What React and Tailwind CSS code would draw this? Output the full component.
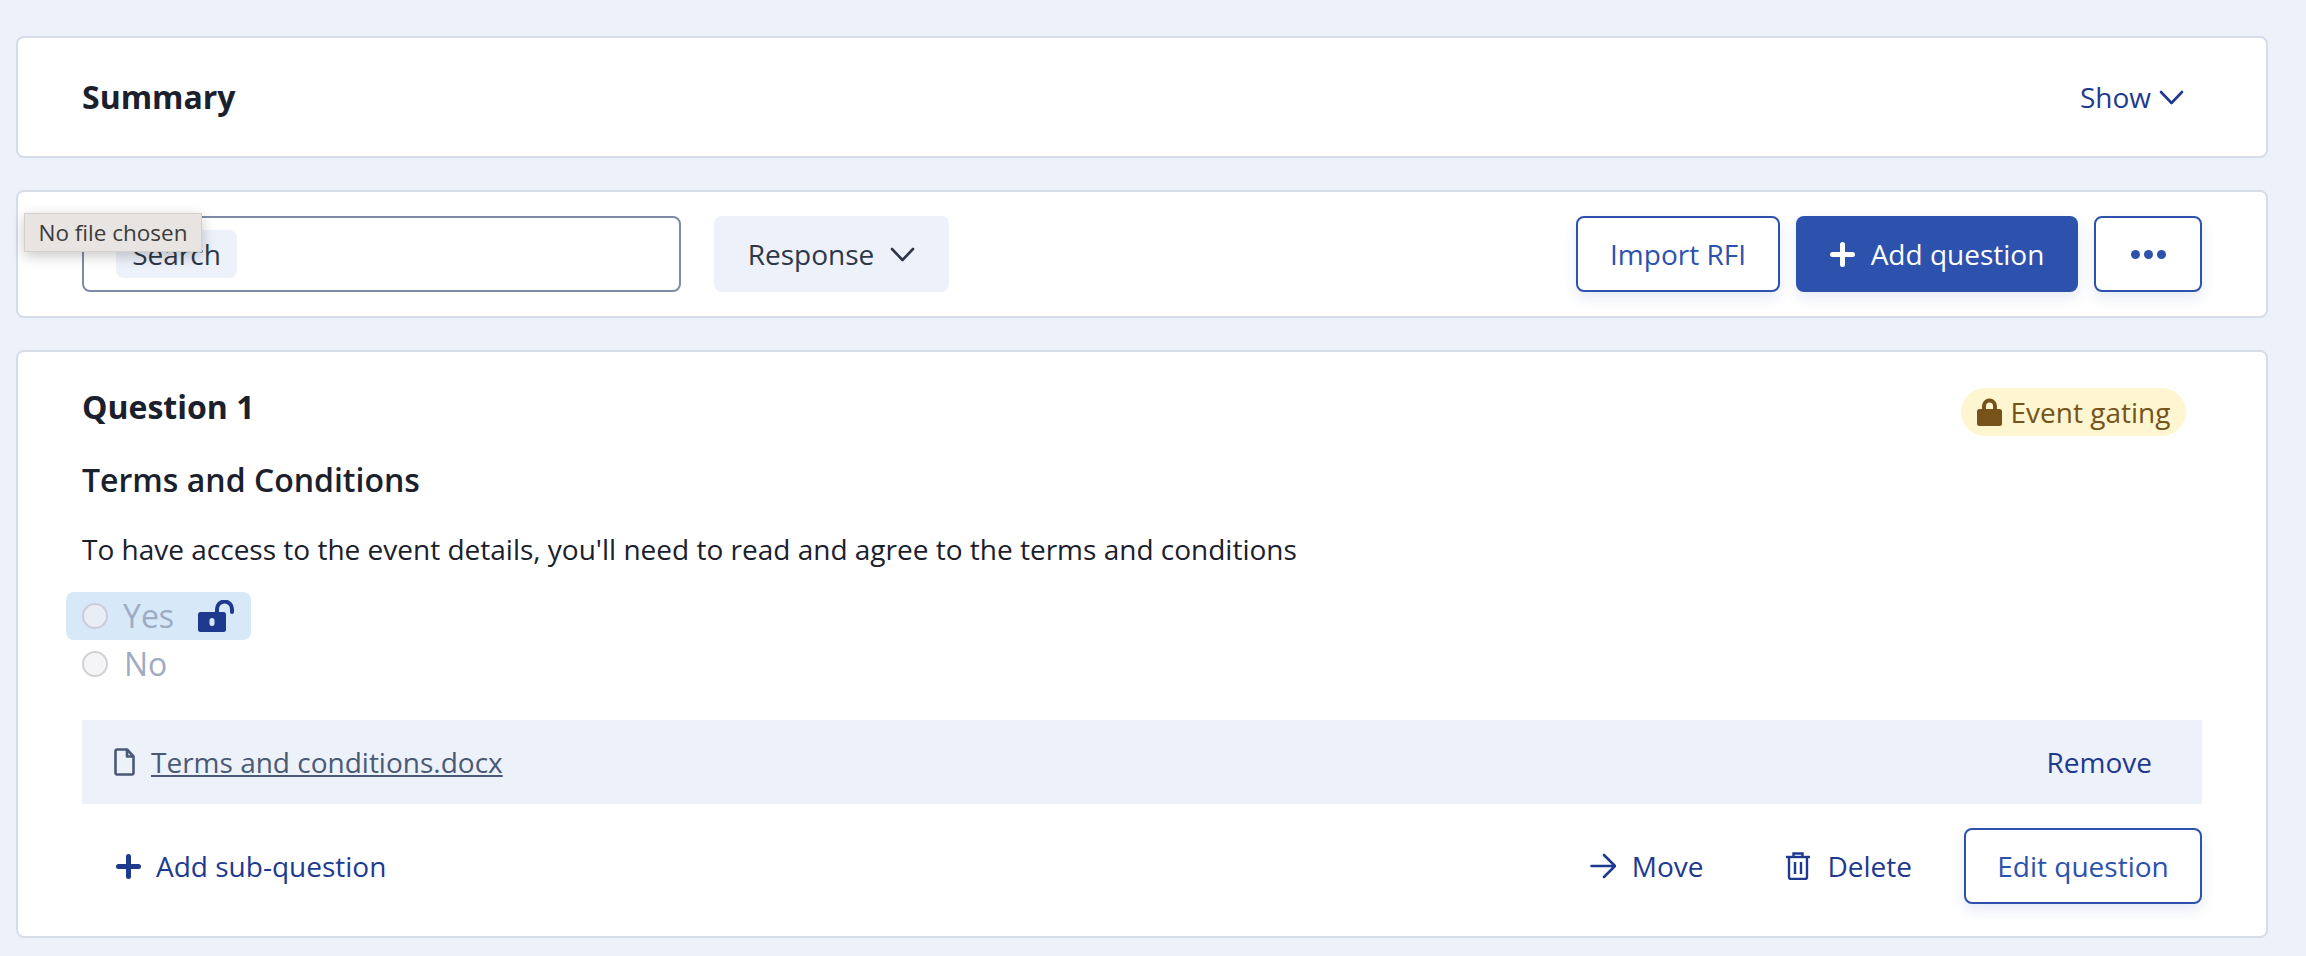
const outlineBtn = "h-[76px] flex items-center justify-center bg-white border-2 border-[#2c52ae] rounded-lg text-[#2c52ae] shadow-[0_6px_14px_rgba(44,82,174,0.12)]";

function Chevron({ color }) {
  return (
    <svg viewBox="0 0 25 15" className="w-[25px] h-[15px]" fill="none" stroke={color} strokeWidth="2.6" strokeLinecap="round" strokeLinejoin="round">
      <path d="M2 2l10.5 11L23 2" />
    </svg>
  );
}

function PlusIcon({ color }) {
  return (
    <svg viewBox="0 0 25 25" className="w-[25px] h-[25px]" fill="none" stroke={color} strokeWidth="5" strokeLinecap="round">
      <path d="M12.5 2.5v20M2.5 12.5h20" />
    </svg>
  );
}

function ArrowIcon() {
  return (
    <svg viewBox="0 0 26 26" className="w-[26px] h-[26px]" fill="none" stroke="#1e3a8f" strokeWidth="2.6" strokeLinecap="round" strokeLinejoin="round">
      <path d="M1.5 13h23M14 2l11 11-11 11" />
    </svg>
  );
}

function FileIcon() {
  return (
    <svg viewBox="0 0 21 28" className="w-[21px] h-[28px]" fill="none" stroke="#4a5a75" strokeWidth="2.6" strokeLinejoin="round">
      <path d="M3 1.5h10l6.5 7V25a1.5 1.5 0 0 1-1.5 1.5H3A1.5 1.5 0 0 1 1.5 25V3A1.5 1.5 0 0 1 3 1.5z" />
      <path d="M13 1.5v7h6.5" />
    </svg>
  );
}

function LockClosed() {
  return (
    <svg viewBox="0 0 25 28" className="w-[25px] h-[28px]" fill="#75531a">
      <path d="M5 13V8a7.5 7.5 0 0 1 15 0v5h-4V8a3.5 3.5 0 0 0-7 0v5z" />
      <rect x="0" y="11" width="25" height="17" rx="2.5" />
    </svg>
  );
}

function LockOpen() {
  return (
    <svg viewBox="0 0 36 32" className="w-[36px] h-[32px]">
      <path d="M19 14V9a7.5 7.5 0 0 1 15 0v3" fill="none" stroke="#1e3a8f" strokeWidth="4" strokeLinecap="round" />
      <rect x="0" y="12" width="28" height="20" rx="2.5" fill="#1e3a8f" />
      <rect x="11.5" y="18" width="5" height="8" rx="2.5" fill="#d7e8f9" />
    </svg>
  );
}

function TrashIcon() {
  return (
    <svg viewBox="0 0 24 28" className="w-[24px] h-[28px]" fill="none" stroke="#1e3a8f" strokeWidth="2.4">
      <path d="M0 5h24" />
      <path d="M7.5 5V1.5h9V5" />
      <path d="M3 5v20a2 2 0 0 0 2 2h14a2 2 0 0 0 2-2V5" />
      <path d="M9 10v12M15 10v12" />
    </svg>
  );
}

export default function App() {
  return (
    <div className="min-h-[956px] bg-[#edf1fa] pt-[36px] pl-[16px] pr-[38px] text-[28px] text-[#1a202c] font-['Open_Sans',sans-serif]">
      <div className="h-[122px] bg-white border-2 border-[#d5dde9] rounded-lg flex items-center justify-between pl-[64px] pr-[82px]">
        <h2 className="text-[32px] font-bold">Summary</h2>
        <button className="flex items-center gap-[8px] text-[#1e3a8f]">
          Show <Chevron color="#1e3a8f" />
        </button>
      </div>

      <div className="relative h-[128px] mt-[32px] bg-white border-2 border-[#d5dde9] rounded-lg flex items-center pl-[64px] pr-[64px]">
        <div className="w-[599px] h-[76px] border-2 border-[#7e8ba5] rounded-lg flex items-center pl-[32px]">
          <span className="h-[48px] w-[121px] bg-[#edf1fa] rounded-lg flex items-center justify-center text-[#2d3748]">Search</span>
        </div>
        <button className="ml-[33px] w-[235px] h-[76px] bg-[#edf1fa] rounded-lg flex items-center justify-center gap-[16px] text-[#2d3748]">
          Response <Chevron color="#2d3748" />
        </button>
        <div className="ml-auto flex gap-[16px]">
          <button className={`${outlineBtn} w-[204px]`}>Import RFI</button>
          <button className="h-[76px] w-[282px] bg-[#2c52ae] rounded-lg flex items-center justify-center gap-[16px] text-white shadow-[0_6px_14px_rgba(44,82,174,0.12)]">
            <PlusIcon color="#ffffff" /> Add question
          </button>
          <button className={`${outlineBtn} w-[108px] gap-[4px]`}>
            <span className="w-[9px] h-[9px] rounded-full bg-[#2c52ae]" />
            <span className="w-[9px] h-[9px] rounded-full bg-[#2c52ae]" />
            <span className="w-[9px] h-[9px] rounded-full bg-[#2c52ae]" />
          </button>
        </div>
        <div className="absolute left-[6px] top-[21px] w-[178px] h-[39px] bg-[#e7e4e1] border border-[#d3d0cd] flex items-center justify-center text-[22.5px] text-[#3c3c3c] shadow-[0_4px_14px_rgba(0,0,0,0.22)]">
          No file chosen
        </div>
      </div>

      <div className="h-[588px] mt-[32px] bg-white border-2 border-[#d5dde9] rounded-lg pl-[64px] pr-[64px] flex flex-col">
        <div className="flex items-start justify-between h-[84px] pt-[36px]">
          <h3 className="text-[32px] font-bold leading-[40px] -mt-[1px]">Question 1</h3>
          <span className="h-[48px] w-[225px] mr-[16px] bg-[#fdf6d0] rounded-full flex items-center justify-center gap-[9px] text-[#75531a]">
            <LockClosed /> Event gating
          </span>
        </div>
        <h4 className="text-[32px] font-semibold leading-[40px] mt-[24px]">Terms and Conditions</h4>
        <p className="leading-[36px] mt-[31px]">To have access to the event details, you'll need to read and agree to the terms and conditions</p>
        <div className="w-[185px] h-[48px] -ml-[16px] mt-[25px] pl-[16px] bg-[#d7e8f9] rounded-lg flex items-center text-[#9eacc3] text-[32px]">
          <span className="w-[26px] h-[26px] rounded-full border-2 border-[#c9ced6] bg-[#e9edf6] shrink-0" />
          <span className="ml-[15px]">Yes</span>
          <span className="ml-[24px]"><LockOpen /></span>
        </div>
        <div className="h-[48px] flex items-center text-[#9eacc3] text-[32px]">
          <span className="w-[26px] h-[26px] rounded-full border-2 border-[#cfd2d8] bg-[#f5f5f6] shrink-0" />
          <span className="ml-[16px]">No</span>
        </div>
        <div className="h-[84px] mt-[32px] bg-[#edf1fa] flex items-center justify-between pl-[32px] pr-[50px]">
          <div className="flex items-center gap-[16px] text-[#4a5a75]">
            <FileIcon />
            <span className="underline">Terms and conditions.docx</span>
          </div>
          <button className="text-[#1e3a8f]">Remove</button>
        </div>
        <div className="flex items-center justify-between mt-[24px] pl-[34px] text-[#1e3a8f]">
          <button className="flex items-center gap-[15px]">
            <PlusIcon color="#1e3a8f" /> Add sub-question
          </button>
          <div className="flex items-center">
            <button className="flex items-center gap-[16px]">
              <ArrowIcon /> Move
            </button>
            <button className="flex items-center gap-[17px] ml-[83px]">
              <TrashIcon /> Delete
            </button>
            <button className={`${outlineBtn} ml-[52px] w-[238px]`}>Edit question</button>
          </div>
        </div>
      </div>
    </div>
  );
}
